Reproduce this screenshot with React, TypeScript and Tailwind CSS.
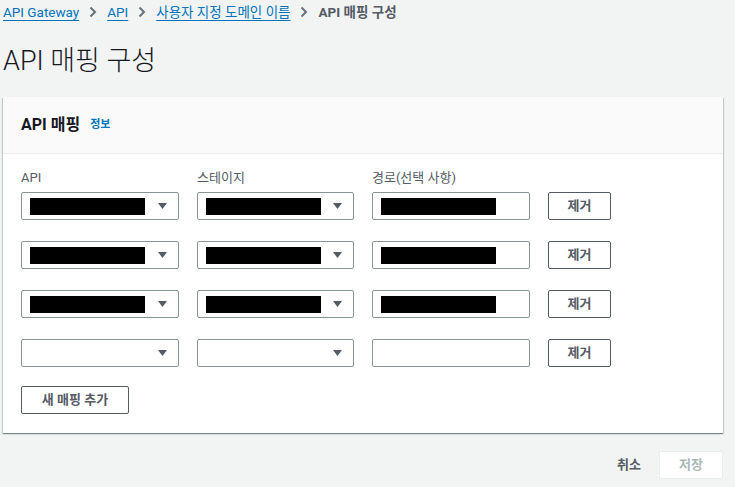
import React from 'react';

const font = { fontFamily: 'Roboto, "Noto Sans CJK KR", sans-serif' };

function Chevron() {
    return (
        <svg width="8" height="12" viewBox="0 0 8 12" className="mx-[10px] shrink-0">
            <path d="M1.5 1.5 L6 6 L1.5 10.5" fill="none" stroke="#687078" strokeWidth="2" />
        </svg>
    );
}

function Caret() {
    return (
        <svg width="9" height="6" viewBox="0 0 9 6" className="shrink-0">
            <path d="M0 0 H9 L4.5 6 Z" fill="#545b64" />
        </svg>
    );
}

function Redacted({ width = 115 }: { width?: number }) {
    return <div className="h-[17px] bg-black" style={{ width }} />;
}

function Select({ filled }: { filled: boolean }) {
    return (
        <div className="flex h-[28px] items-center justify-between rounded-[2px] border border-[#879596] bg-white pl-[8px] pr-[11px]">
            {filled ? <Redacted /> : <span />}
            <Caret />
        </div>
    );
}

function PathInput({ filled }: { filled: boolean }) {
    return (
        <div className="flex h-[28px] items-center rounded-[2px] border border-[#879596] bg-white pl-[8px]">
            {filled && <Redacted />}
        </div>
    );
}

function RemoveButton() {
    return (
        <button className="h-[28px] rounded-[2px] border border-[#545b64] bg-white text-[13px] font-semibold text-[#545b64]">
            제거
        </button>
    );
}

export default function App() {
    const rows = [true, true, true, false];

    return (
        <div className="h-[487px] w-[735px] overflow-hidden bg-[#f2f3f3] pl-[3px] pr-[12px]" style={font}>
            {/* Breadcrumbs */}
            <div className="flex h-[24px] items-center text-[13.5px]">
                <a className="text-[#0073bb] underline underline-offset-[3px]">API Gateway</a>
                <Chevron />
                <a className="text-[#0073bb] underline underline-offset-[3px]">API</a>
                <Chevron />
                <a className="text-[#0073bb] underline underline-offset-[3px]">사용자 지정 도메인 이름</a>
                <Chevron />
                <span className="font-bold text-[#545b64]">API 매핑 구성</span>
            </div>

            <h1 className="mt-[19px] h-[36px] text-[27px] font-light leading-[36px] text-[#16191f]">API 매핑 구성</h1>

            <div className="mt-[18px] bg-white shadow-[0_1px_1px_0_rgba(0,28,36,0.3),1px_1px_1px_0_rgba(0,28,36,0.15),-1px_1px_1px_0_rgba(0,28,36,0.15)]">
                <div className="flex h-[57px] items-center border-b border-[#eaeded] bg-[#fafafa] px-[18px]">
                    <span className="text-[16px] font-bold text-[#16191f]">API 매핑</span>
                    <span className="ml-[10px] text-[11px] font-bold text-[#0073bb]">정보</span>
                </div>

                <div className="px-[18px] pb-[19px] pt-[14px]">
                    <div className="grid grid-cols-[158px_157px_158px_63px] gap-x-[18px] gap-y-[21px]">
                        <div className="-mb-[17px] h-[20px] text-[13px] leading-[20px] text-[#545b64]">API</div>
                        <div className="-mb-[17px] h-[20px] text-[13px] leading-[20px] text-[#545b64]">스테이지</div>
                        <div className="-mb-[17px] h-[20px] text-[13px] leading-[20px] text-[#545b64]">경로(선택 사항)</div>
                        <div className="-mb-[17px]" />
                        {rows.map((filled, i) => (
                            <React.Fragment key={i}>
                                <Select filled={filled} />
                                <Select filled={filled} />
                                <PathInput filled={filled} />
                                <RemoveButton />
                            </React.Fragment>
                        ))}
                    </div>

                    <button className="mt-[19px] h-[28px] w-[108px] rounded-[2px] border border-[#545b64] bg-white text-[13px] font-semibold text-[#545b64]">
                        새 매핑 추가
                    </button>
                </div>
            </div>

            <div className="mt-[18px] flex items-center justify-end">
                <span className="text-[13px] font-semibold text-[#545b64]">취소</span>
                <button className="ml-[18px] h-[28px] w-[64px] rounded-[2px] border border-[#eaeded] bg-white text-[13px] font-semibold text-[#aab7b8]">
                    저장
                </button>
            </div>
        </div>
    );
}
